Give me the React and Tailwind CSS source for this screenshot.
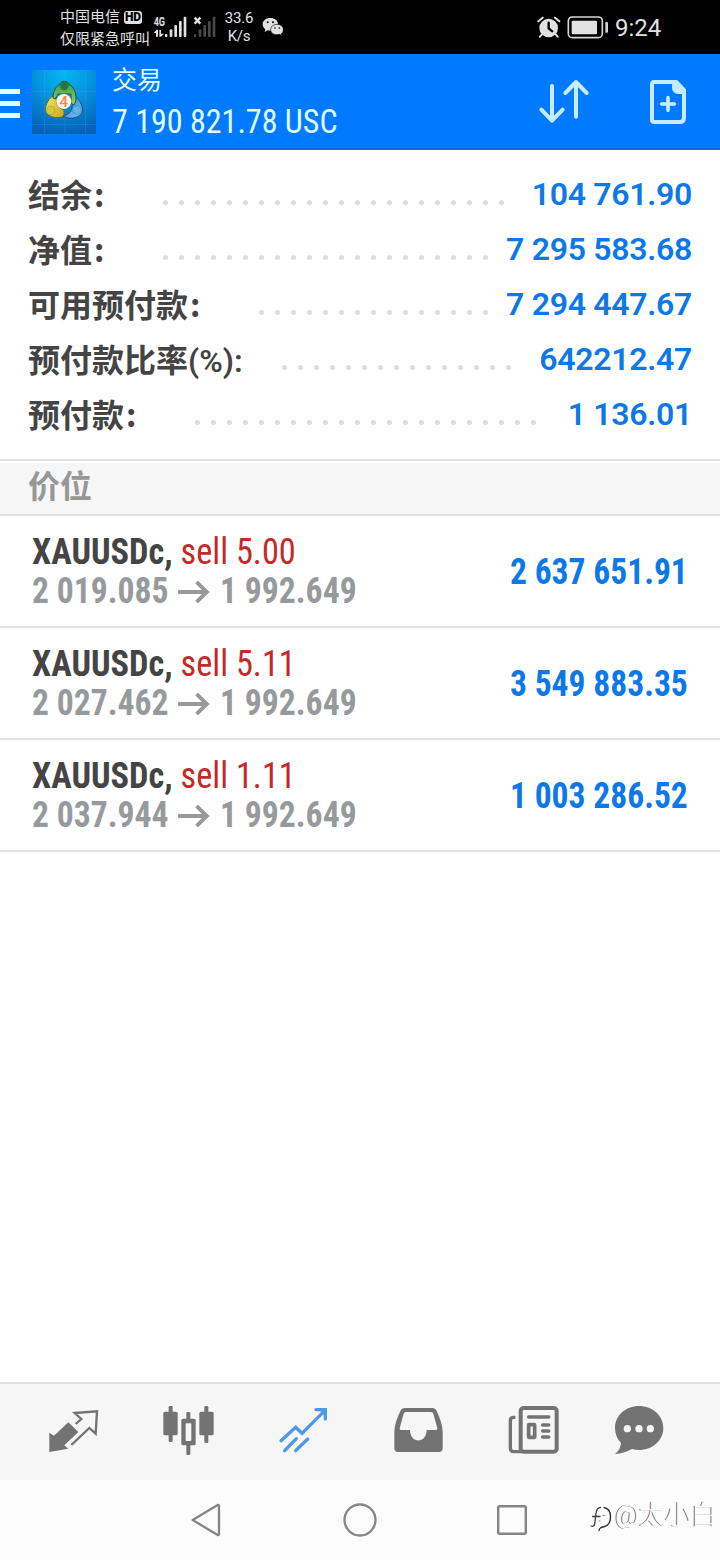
const SUMMARY = [
  { label: "结余", suffix: ":", value: "104 761.90", dots: 22, dotsClass: "left-[163px]" },
  { label: "净值", suffix: ":", value: "7 295 583.68", dots: 21, dotsClass: "left-[163px]" },
  { label: "可用预付款", suffix: ":", value: "7 294 447.67", dots: 15, dotsClass: "left-[259px]" },
  { label: "预付款比率", unit: "(%):", value: "642212.47", dots: 15, dotsClass: "left-[282px]" },
  { label: "预付款", suffix: ":", value: "1 136.01", dots: 22, dotsClass: "left-[195px]" },
];

const POSITIONS = [
  { symbol: "XAUUSDc,", side: "sell 5.00", open: "2 019.085", current: "1 992.649", profit: "2 637 651.91" },
  { symbol: "XAUUSDc,", side: "sell 5.11", open: "2 027.462", current: "1 992.649", profit: "3 549 883.35" },
  { symbol: "XAUUSDc,", side: "sell 1.11", open: "2 037.944", current: "1 992.649", profit: "1 003 286.52" },
];

function StatusBar() {
  return (
    <div className="flex h-[54px] bg-black pl-[60px] text-[#e2e2e2]">
      <div className="w-[93px] pt-[6px] text-[15px] leading-[22px] whitespace-nowrap">
        <div className="flex items-center gap-1">
          中国电信
          <span className="flex h-[13px] w-[18px] items-center justify-center rounded-[3px] bg-[#e2e2e2] text-[12px] leading-none font-black text-black">HD</span>
        </div>
        <div>仅限紧急呼叫</div>
      </div>
      <svg className="mt-[14px] h-6 w-[68px]" viewBox="459 42 204 72">
        <text x="461" y="77" fontSize="36" fontWeight="700" fill="#e2e2e2" textLength="34" lengthAdjust="spacingAndGlyphs">4G</text>
        <g fill="#e2e2e2">
          <path d="M461 99l9-10h4v21h-6v-11zM478 90h5v11h9l-9 9h-5z" />
          <rect x="495" y="102" width="7" height="9" rx="2" />
          <rect x="509" y="88" width="8" height="23" rx="3" />
          <rect x="523" y="75" width="8" height="36" rx="3" />
          <rect x="537" y="63" width="8" height="48" rx="3" />
          <rect x="551" y="50" width="8" height="61" rx="3" />
        </g>
        <path d="M584 53l17 18M601 53l-17 18" stroke="#e2e2e2" strokeWidth="7" />
        <g fill="#484848">
          <rect x="582" y="102" width="7" height="9" rx="2" />
          <rect x="596" y="88" width="8" height="23" rx="3" />
          <rect x="610" y="75" width="8" height="36" rx="3" />
          <rect x="624" y="63" width="8" height="48" rx="3" />
          <rect x="638" y="50" width="8" height="61" rx="3" />
        </g>
      </svg>
      <div className="w-9 pt-[9px] text-center text-[15px] leading-[18px] tracking-[-0.2px]">
        <div>33.6</div>
        <div>K/s</div>
      </div>
      <svg className="mt-[17px] ml-[4px] h-5 w-6" viewBox="783 51 72 60">
        <path d="M811 54c13 0 23 8 23 18 0 11-10 20-23 20-3 0-6 0-8-1l-9 5 2-8c-5-4-8-9-8-16 0-10 10-18 23-18z" fill="#e2e2e2" />
        <path d="M831 73c11 0 19 7 19 16 0 5-2 9-6 12l2 6-7-4c-2 1-5 1-8 1-11 0-19-6-19-15s8-16 19-16z" fill="#e2e2e2" stroke="#000" strokeWidth="2" />
        <g fill="#000"><circle cx="803" cy="67" r="3" /><circle cx="819" cy="67" r="3" /><circle cx="825" cy="84" r="2.5" /><circle cx="838" cy="84" r="2.5" /></g>
      </svg>
      <svg className="mt-[14px] ml-[252px] h-[26px] w-[76px]" viewBox="111 42 228 78">
        <circle cx="146" cy="84" r="28" fill="#e2e2e2" />
        <path d="M115 64l13-11M178 64l-13-11M126 103l-6 7M167 103l6 7" stroke="#e2e2e2" strokeWidth="6" strokeLinecap="round" />
        <path d="M146 68v17l11 9" fill="none" stroke="#000" strokeWidth="7" strokeLinecap="round" />
        <rect x="205" y="51" width="102" height="62" rx="12" fill="none" stroke="#d5d5d5" strokeWidth="5" />
        <rect x="215" y="62" width="76" height="41" rx="4" fill="#e2e2e2" />
        <rect x="316" y="66" width="8" height="32" rx="3" fill="#d5d5d5" />
      </svg>
      <div className="ml-[2px] pt-[1px] text-[24px] leading-[54px]">9:24</div>
    </div>
  );
}

function AppLogo() {
  return (
    <svg className="h-16 w-16" viewBox="0 0 64 64">
      <defs>
        <radialGradient id="logoBg" cx="50%" cy="5%" r="95%">
          <stop offset="0" stopColor="#04b8f2" />
          <stop offset="0.5" stopColor="#0590dc" />
          <stop offset="1" stopColor="#0563b8" />
        </radialGradient>
        <linearGradient id="green" x1="0" y1="0" x2="0" y2="1"><stop offset="0" stopColor="#3a9a42" /><stop offset="1" stopColor="#98cc74" /></linearGradient>
        <linearGradient id="yellow" x1="0" y1="0" x2="1" y2="1"><stop offset="0" stopColor="#f0e868" /><stop offset="1" stopColor="#c9a81c" /></linearGradient>
        <linearGradient id="blue" x1="0" y1="0" x2="1" y2="1"><stop offset="0" stopColor="#2f86cc" /><stop offset="1" stopColor="#7cc0ec" /></linearGradient>
      </defs>
      <rect width="64" height="64" fill="url(#logoBg)" />
      <path d="M12.500 0v64M53.500 0v64M33 0v64M0 21.500h64M0 54.500h64" stroke="#5cc4f0" strokeOpacity="0.16" />
      <g strokeWidth="1" strokeLinejoin="round">
        <path d="M22 25.500c-5 2-8.500 9-8.500 14 0 7 12 10.500 18.500 6.500v-6c-6-2-8-6-8-13z" fill="url(#yellow)" stroke="#6b6a20" />
        <path d="M41 26c6 2 9.500 9 9.500 14 0 8-13 10.500-19.500 6 4-1 8-3 9-8z" fill="url(#blue)" stroke="#174f86" />
        <path d="M21 28c0-7 3-12 6.500-13 1-5 9-5 10 0 4 1 6.500 7 6.500 14 0 2-1 4-2 6l-3-2V24H26l-3 5z" fill="url(#green)" stroke="#1b5c38" />
      </g>
      <circle cx="32.300" cy="16" r="4.200" fill="#23793a" />
      <circle cx="18.500" cy="40.500" r="4.300" fill="#d8c640" stroke="#9a8a20" strokeWidth="0.500" />
      <circle cx="45" cy="40" r="4.300" fill="#5fb4ea" stroke="#2a74b0" strokeWidth="0.500" />
      <circle cx="31.800" cy="31.500" r="7.500" fill="#fff6ec" />
      <text x="31.800" y="37" textAnchor="middle" fontSize="15" fontWeight="500" fill="#ee8a44">4</text>
    </svg>
  );
}

function Header() {
  return (
    <header className="flex h-24 border-b-2 border-[#0d6be0] bg-[#007aff] text-[#e2fcff]">
      <div className="mt-[35px] flex w-5 flex-col gap-[7px]">
        <span className="h-[5px] bg-[#e2fcff]" />
        <span className="h-[5px] bg-[#e2fcff]" />
        <span className="h-[5px] bg-[#e2fcff]" />
      </div>
      <div className="mt-4 ml-3"><AppLogo /></div>
      <div className="ml-4 w-[424px]">
        <div className="mt-[9px] text-[25px] leading-9">交易</div>
        <div className="mt-[2px] origin-left scale-x-[0.942] font-[Roboto_Condensed,Roboto] text-[34px] leading-[41px] font-stretch-75% whitespace-nowrap">7 190 821.78 USC</div>
      </div>
      <svg className="mt-[22px] h-[52px] w-[60px]" viewBox="108 228 180 156" fill="none" stroke="#c9ebff" strokeWidth="12" strokeLinecap="round" strokeLinejoin="round">
        <path d="M156 258v104M124 329l32 33 32-33M228 350V247M196 279l32-33 32 33" />
      </svg>
      <svg className="mt-[22px] ml-[48px] h-[52px] w-[48px]" viewBox="432 228 144 156">
        <path d="M463 246h66l23 24v83q0 13-13 13h-76q-7 0-7-7V253q0-7 7-7z" fill="none" stroke="#c9ebff" strokeWidth="12" />
        <path d="M517 244h14l25 26v12h-23q-17-3-17-20z" fill="#c9ebff" />
        <path d="M504 293v38M485 312h38" stroke="#c9ebff" strokeWidth="11" strokeLinecap="round" />
      </svg>
    </header>
  );
}

function SummaryRow({ label, suffix, unit, value, dots, dotsClass }) {
  return (
    <div className="relative flex h-[55px] items-center justify-between pr-[28px] pl-[28px]">
      <span className={`text-[32px] leading-none font-bold text-[#444444] ${unit ? "pt-[2px]" : ""}`}>
        {label}
        {suffix && <span className="ml-[2px] font-['Noto_Sans_CJK_SC']">{suffix}</span>}
        {unit && <span className="font-semibold">{unit}</span>}
      </span>
      <div className={`absolute top-[33px] flex gap-[11px] ${dotsClass}`}>
        {Array.from({ length: dots }, (_, i) => <span key={i} className="h-[5px] w-[5px] rounded-full bg-[#dedede]" />)}
      </div>
      <span className="pb-px text-[32px] leading-none font-semibold tracking-[-0.3px] text-[#0d78e8]">{value}</span>
    </div>
  );
}

function PositionRow({ symbol, side, open, current, profit }) {
  return (
    <div className="flex h-28 items-center justify-between border-b-2 border-[#e2e2e2] pt-[2px] pr-8 pl-8 font-[Roboto_Condensed,Roboto] text-[36px] font-stretch-75% whitespace-nowrap">
      <div className="leading-[39px]">
        <div className="origin-left scale-x-[0.953] font-bold text-[#444444]">{symbol} <span className="font-normal text-[#c62828]">{side}</span></div>
        <div className="flex origin-left scale-x-[0.935] items-center font-bold text-[#979a9c]">
          {open}
          <svg className="mr-[11px] ml-[10px] h-6 w-[34px]" viewBox="0 0 34 24" fill="none" stroke="#979a9c" strokeWidth="4"><path d="M0 12h31M20 2l11 10-11 10" /></svg>
          {current}
        </div>
      </div>
      <div className="origin-right scale-x-[0.932] font-bold text-[#0d78e8]">{profit}</div>
    </div>
  );
}

function TabBar() {
  return (
    <nav className="flex h-[98px] gap-[55px] border-t-2 border-[#e0e0e0] bg-[#f6f6f6] pt-4 pl-11">
      <svg className="h-[60px] w-[60px]" viewBox="132 60 180 180">
        <path d="M205 127l30 29-42 40 12 10-57 10V158l14 9z" fill="#737373" />
        <path d="M227 132l17-15-20-18 67-5-4 67-19-17-54 51" fill="none" stroke="#737373" strokeWidth="7" />
      </svg>
      <svg className="h-[60px] w-[60px]" viewBox="477 60 180 180" fill="#737373">
        <rect x="506" y="78" width="12" height="108" rx="4" />
        <rect x="490" y="95" width="43" height="71" rx="5" />
        <rect x="559" y="96" width="12" height="129" rx="4" />
        <rect x="544" y="116" width="43" height="80" rx="5" />
        <rect x="557" y="130" width="17" height="53" rx="2" fill="#f6f6f6" />
        <rect x="613" y="78" width="12" height="111" rx="4" />
        <rect x="598" y="95" width="43" height="71" rx="5" />
      </svg>
      <svg className="h-[60px] w-[60px]" viewBox="822 60 180 180" fill="none" stroke="#4d99e8" strokeWidth="10" strokeLinecap="round">
        <path d="M843 182l44-40 19 18 66-66M948 89h28v28M854 212l35-36M887 212l36-35" />
        <path d="M955 87h23v24z" fill="#4d99e8" stroke="none" />
      </svg>
      <svg className="h-[60px] w-[60px]" viewBox="87 60 180 180">
        <path fillRule="evenodd" d="M135 84h82q9 0 13 9 18 38 18 62v50q0 11-11 11H114q-11 0-11-11v-50q0-24 18-62 4-9 14-9zM138 96q-5 0-7 5l-12 44q-1 5 4 5h27c1 42 49 42 50 0h28q5 0 4-5l-12-44q-2-5-7-5z" fill="#737373" />
      </svg>
      <svg className="h-[60px] w-[60px]" viewBox="432 60 180 180" fill="none" stroke="#737373" strokeLinecap="round">
        <rect x="482" y="84" width="108" height="131" rx="9" strokeWidth="12" />
        <path d="M466 112h-5q-10 0-10 10v82q0 11 11 11h25" strokeWidth="10" strokeLinecap="butt" />
        <path d="M506 111h60M548 135h18M548 153h18M548 171h18" strokeWidth="11" />
        <rect x="506" y="134" width="18" height="38" rx="1" strokeWidth="11" />
      </svg>
      <svg className="-ml-[10px] h-[60px] w-[60px]" viewBox="747 60 180 180">
        <path d="M837 78c41 0 73 29 73 66s-32 66-73 66c-7 0-14-1-21-3-17 9-32 14-51 15 12-9 17-20 18-33-12-12-18-28-18-45 0-37 32-66 72-66z" fill="#737373" />
        <g fill="#f6f6f6"><circle cx="802" cy="146" r="11" /><circle cx="837" cy="146" r="11" /><circle cx="871" cy="146" r="11" /></g>
      </svg>
    </nav>
  );
}

function SystemNav() {
  return (
    <div className="relative flex h-20 items-center gap-[117px] bg-[#fcfcfc] pl-[189px]">
      <svg className="h-9 w-9" viewBox="567 366 108 108" fill="none" stroke="#858585" strokeWidth="7" strokeLinejoin="round"><path d="M578 420l75-45q4-1 4 3v84q0 4-4 3z" /></svg>
      <svg className="h-9 w-9" viewBox="0 0 36 36" fill="none" stroke="#858585" strokeWidth="2.3"><circle cx="18" cy="18" r="15.500" /></svg>
      <svg className="-ml-px h-9 w-9" viewBox="0 0 36 36" fill="none" stroke="#858585" strokeWidth="2.4"><rect x="4.200" y="4.200" width="27.600" height="27.600" rx="1.500" /></svg>
      <div className="absolute top-[17px] left-[589px] flex items-center opacity-95">
        <svg className="mt-1 h-8 w-[26px]" viewBox="0 0 26 32" fill="none" strokeLinecap="round">
          <path d="M11.500 6.500c-3 0-4 2-4.500 6s-1 9-1.500 11-2 2-3.500 1.500M3.500 15.500H11" stroke="#333" strokeWidth="1.300" />
          <path d="M15 6.500c5 1 6.500 4 6.500 9s-2 9-6 10-5 1.500-5.500 4" stroke="#222" strokeWidth="1.300" />
          <path d="M14 14.500h2M10 20h1" stroke="#888" />
        </svg>
        <span className="text-[26px] leading-[34px] font-light whitespace-nowrap text-white [text-shadow:-1px_0_0.5px_#555]">@太小白</span>
      </div>
    </div>
  );
}

export default function App() {
  return (
    <div className="flex h-[1560px] w-[720px] flex-col overflow-hidden bg-white font-[Roboto,'Noto_Sans_CJK_SC',sans-serif]">
      <StatusBar />
      <Header />
      <section className="h-[309px] pt-[17px]">
        {SUMMARY.map((row) => <SummaryRow key={row.label} {...row} />)}
      </section>
      <div className="border-t-2 border-b-2 border-[#e2e2e2] pt-[2px]">
        <div className="h-[51px] bg-[#f6f6f6] pl-[28px] text-[32px] leading-[48px] font-bold text-[#979797]">价位</div>
      </div>
      <section className="flex-1">
        {POSITIONS.map((pos) => <PositionRow key={pos.profit} {...pos} />)}
      </section>
      <TabBar />
      <SystemNav />
    </div>
  );
}
